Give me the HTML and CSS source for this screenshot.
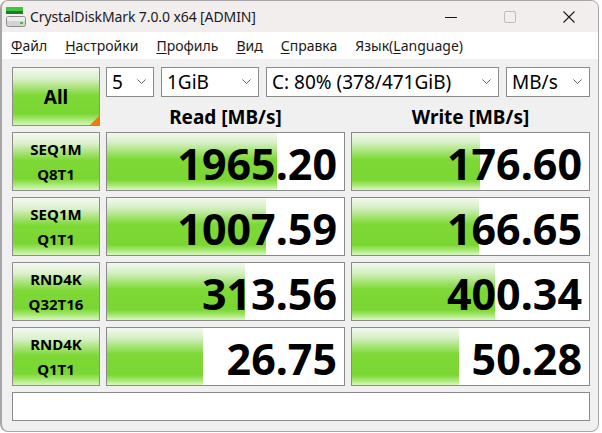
FILE: index.html
```html
<!DOCTYPE html>
<html lang="ru">
<head>
<meta charset="utf-8">
<title>CrystalDiskMark</title>
<link rel="stylesheet" href="styles.css">
</head>
<body>
<div class="window">
  <div class="titlebar">
    <svg class="appicon" width="22" height="22" viewBox="0 0 22 22">
      <rect x="2" y="0" width="17" height="4" fill="#3cc83c"/>
      <rect x="2" y="4" width="17" height="3" fill="#1f7a2a"/>
      <rect x="2.5" y="9.5" width="19" height="10" rx="2" fill="#d4d4d4" stroke="#8c8c8c"/>
      <rect x="3" y="10" width="18" height="4" rx="1" fill="#ececec"/>
      <rect x="16" y="15" width="3" height="2" fill="#3cc83c"/>
    </svg>
    <span class="title">CrystalDiskMark 7.0.0 x64 [ADMIN]</span>
    <div class="controls">
      <span class="ctl"><svg width="14" height="14" viewBox="0 0 14 14"><line x1="1" y1="7.5" x2="13" y2="7.5" stroke="#1a1a1a" stroke-width="1"/></svg></span>
      <span class="ctl"><svg width="14" height="14" viewBox="0 0 14 14"><rect x="1.5" y="1.5" width="11" height="11" rx="1.5" fill="none" stroke="#bdbdbd" stroke-width="1"/></svg></span>
      <span class="ctl"><svg width="14" height="14" viewBox="0 0 14 14"><path d="M1.5 1.5 L12.5 12.5 M12.5 1.5 L1.5 12.5" stroke="#1a1a1a" stroke-width="1.1"/></svg></span>
    </div>
  </div>
  <div class="menubar">
    <span class="menu"><span class="ak">Ф</span>айл</span>
    <span class="menu"><span class="ak">Н</span>астройки</span>
    <span class="menu"><span class="ak">П</span>рофиль</span>
    <span class="menu"><span class="ak">В</span>ид</span>
    <span class="menu"><span class="ak">С</span>правка</span>
    <span class="menu">Язык(<span class="ak">L</span>anguage)</span>
  </div>
  <div class="client">
    <div class="grid">
      <div class="allbtn green">All<span class="corner"></span></div>
      <div class="topright">
        <div class="combos">
          <div class="combo c1"><span>5</span><svg class="chev" width="9" height="5" viewBox="0 0 9 5"><path d="M0.5 0.5 L4.5 4.5 L8.5 0.5" fill="none" stroke="#606060" stroke-width="1"/></svg></div>
          <div class="combo c2"><span>1GiB</span><svg class="chev" width="9" height="5" viewBox="0 0 9 5"><path d="M0.5 0.5 L4.5 4.5 L8.5 0.5" fill="none" stroke="#606060" stroke-width="1"/></svg></div>
          <div class="combo c3"><span>C: 80% (378/471GiB)</span><svg class="chev" width="9" height="5" viewBox="0 0 9 5"><path d="M0.5 0.5 L4.5 4.5 L8.5 0.5" fill="none" stroke="#606060" stroke-width="1"/></svg></div>
          <div class="combo c4"><span>MB/s</span><svg class="chev" width="9" height="5" viewBox="0 0 9 5"><path d="M0.5 0.5 L4.5 4.5 L8.5 0.5" fill="none" stroke="#606060" stroke-width="1"/></svg></div>
        </div>
        <div class="headers">
          <div class="hdr">Read [MB/s]</div>
          <div class="hdr">Write [MB/s]</div>
        </div>
      </div>

      <div class="label green">SEQ1M<br>Q8T1</div>
      <div class="cell" style="background-size: 170px 100%">1965.20</div>
      <div class="cell" style="background-size: 128px 100%">176.60</div>

      <div class="label green">SEQ1M<br>Q1T1</div>
      <div class="cell" style="background-size: 159px 100%">1007.59</div>
      <div class="cell" style="background-size: 127px 100%">166.65</div>

      <div class="label green">RND4K<br>Q32T16</div>
      <div class="cell" style="background-size: 138px 100%">313.56</div>
      <div class="cell" style="background-size: 143px 100%">400.34</div>

      <div class="label green">RND4K<br>Q1T1</div>
      <div class="cell" style="background-size: 96px 100%">26.75</div>
      <div class="cell" style="background-size: 107px 100%">50.28</div>

      <div class="status"></div>
    </div>
  </div>
</div>
</body>
</html>
```

FILE: styles.css
```css
html, body {
  margin: 0;
  padding: 0;
  background: #ffffff;
}
body {
  font-family: "Noto Sans", "Open Sans", sans-serif;
  color: #000;
}
.window {
  width: 596px;
  height: 430px;
  border: 1px solid #a6a6a6;
  border-left-width: 2px;
  border-radius: 8px;
  overflow: hidden;
  background: #f0f0f0;
  display: flex;
  flex-direction: column;
}
.titlebar {
  flex: none;
  height: 31px;
  background: #f3eeee;
  display: flex;
  align-items: center;
  padding-left: 2px;
}
.appicon {
  margin-top: 3px;
  flex: none;
}
.title {
  margin-left: 4px;
  font-size: 14px;
  color: #1a1a1a;
  letter-spacing: -0.1px;
}
.controls {
  margin-left: auto;
  display: flex;
  height: 100%;
}
.ctl {
  width: 59px;
  display: flex;
  align-items: center;
  justify-content: center;
}
.menubar {
  flex: none;
  height: 27px;
  background: #ffffff;
  display: flex;
  align-items: center;
  padding-left: 9px;
  gap: 18px;
  font-size: 14px;
  color: #1a1a1a;
}
.ak {
  text-decoration: underline;
  text-underline-offset: 2px;
  text-decoration-thickness: 1px;
}
.client {
  flex: 1;
  padding: 8px 0 0 10px;
}
.grid {
  display: grid;
  grid-template-columns: 88px 239px 239px;
  grid-template-rows: 59px 59px 59px 59px 59px 29px;
  column-gap: 6px;
  row-gap: 6px;
}
.green {
  background: linear-gradient(to bottom,
    #f4f9f1 0%,
    #dcf1ce 18%,
    #a4e072 36%,
    #7ed936 48%,
    #7ad632 80%,
    #a4e870 90%,
    #d6f6bc 100%);
  border: 1px solid #8e8e8e;
  box-sizing: border-box;
}
.allbtn {
  position: relative;
  display: flex;
  align-items: center;
  justify-content: center;
  font-weight: 700;
  font-size: 19px;
}
.corner {
  position: absolute;
  right: 0;
  bottom: 0;
  width: 0;
  height: 0;
  border-left: 9px solid transparent;
  border-bottom: 9px solid #f07a14;
}
.topright {
  grid-column: 2 / span 2;
  display: flex;
  flex-direction: column;
}
.combos {
  display: flex;
  gap: 7px;
  height: 30px;
}
.combo {
  box-sizing: border-box;
  height: 30px;
  background: #ffffff;
  border: 1px solid #8a8a8a;
  display: flex;
  align-items: center;
  padding: 0 7px 0 5px;
  font-size: 19px;
  color: #000;
}
.combo span {
  flex: 1;
  white-space: nowrap;
}
.chev {
  flex: none;
  margin-bottom: 2px;
}
.c1 { width: 48px; }
.c2 { width: 98px; }
.c3 { width: 233px; }
.c4 { width: 84px; }
.headers {
  flex: 1;
  display: grid;
  grid-template-columns: 239px 239px;
  column-gap: 6px;
}
.hdr {
  text-align: center;
  font-weight: 700;
  font-size: 19px;
  line-height: 22px;
  padding-top: 9px;
}
.label {
  display: flex;
  flex-direction: column;
  align-items: center;
  justify-content: center;
  text-align: center;
  font-weight: 700;
  font-size: 15px;
  line-height: 25px;
  padding-top: 1px;
}
.cell {
  box-sizing: border-box;
  border: 1px solid #8a8a8a;
  background-color: #ffffff;
  background-image: linear-gradient(to bottom,
    #f2f8ee 0%,
    #d8f0c8 16%,
    #a2e270 34%,
    #7ed936 46%,
    #7ad632 82%,
    #a8ea74 92%,
    #dcf8c6 100%);
  background-repeat: no-repeat;
  background-position: left top;
  display: flex;
  align-items: center;
  justify-content: flex-end;
  padding: 3px 7px 0 0;
  font-weight: 700;
  font-size: 43px;
  letter-spacing: 0;
}
.status {
  grid-column: 1 / span 3;
  box-sizing: border-box;
  border: 1px solid #8a8a8a;
  background: #ffffff;
}
```
